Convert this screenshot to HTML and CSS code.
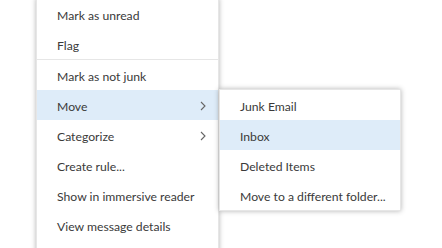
FILE: index.html
```html
<!DOCTYPE html>
<html lang="en">
<head>
    <meta charset="UTF-8">
    <title>Context menu</title>
    <link rel="stylesheet" href="styles.css">
</head>
<body>
    <ul class="menu">
        <li class="item">Mark as unread</li>
        <li class="item">Flag</li>
        <li class="divider"></li>
        <li class="item">Mark as not junk</li>
        <li class="item active has-sub">
            <span>Move</span>
            <svg class="chevron" width="6" height="10" viewBox="0 0 6 10"><path d="M1 1 L5 5 L1 9" fill="none" stroke="#666" stroke-width="1.1"/></svg>
            <ul class="submenu">
                <li class="item">Junk Email</li>
                <li class="item active">Inbox</li>
                <li class="item">Deleted Items</li>
                <li class="item">Move to a different folder...</li>
            </ul>
        </li>
        <li class="item has-sub">
            <span>Categorize</span>
            <svg class="chevron" width="6" height="10" viewBox="0 0 6 10"><path d="M1 1 L5 5 L1 9" fill="none" stroke="#666" stroke-width="1.1"/></svg>
        </li>
        <li class="item">Create rule...</li>
        <li class="item">Show in immersive reader</li>
        <li class="item">View message details</li>
    </ul>
</body>
</html>
```

FILE: styles.css
```css
body {
    margin: 0;
    background: #fff;
    font-family: 'Lato', 'Noto Sans', sans-serif;
    font-size: 12.2px;
    color: #3a3a3a;
    overflow: hidden;
}
ul {
    list-style: none;
    margin: 0;
    padding: 0;
}
.menu {
    width: 181px;
    margin: -2px 0 0 36px;
    padding-bottom: 20px;
    background: #fff;
    border: 1px solid #e6e6e6;
    box-shadow: 0 0 5px rgba(0, 0, 0, 0.3);
}
.item {
    position: relative;
    display: flex;
    align-items: center;
    justify-content: space-between;
    height: 30px;
    padding: 2px 12px 0 20px;
    box-sizing: border-box;
    white-space: nowrap;
}
.item.active {
    background: #deecf9;
}
.divider {
    height: 1px;
    background: #e6e6e6;
}
.chevron {
    display: block;
}
.submenu {
    position: absolute;
    top: -1px;
    left: calc(100% + 1px);
    width: 180px;
    background: #fff;
    border: 1px solid #e6e6e6;
    box-shadow: 0 0 5px rgba(0, 0, 0, 0.3);
    z-index: 2;
}
.submenu .item {
    padding-right: 20px;
}
```
